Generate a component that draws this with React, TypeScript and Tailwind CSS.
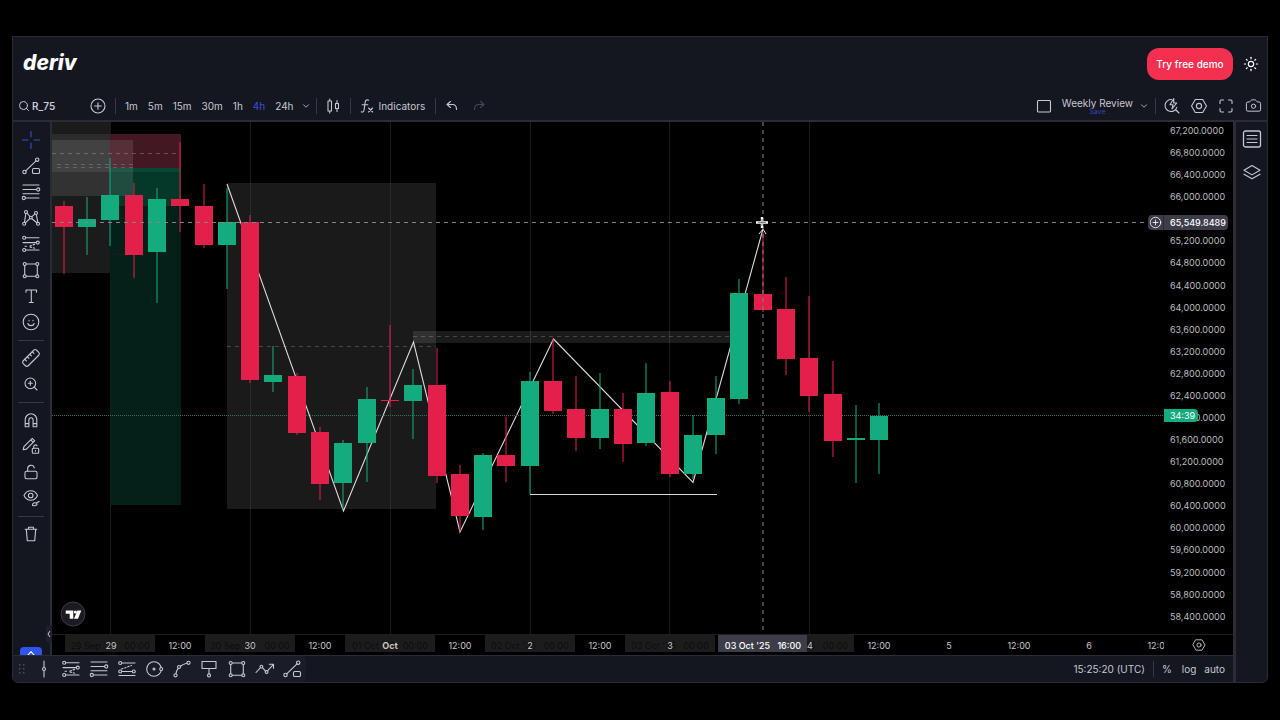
import React from "react";
import { Search, ChevronDown, ZoomIn, LockOpen, Ruler, Camera, Sun } from "lucide-react";

type IconProps = { children: React.ReactNode; size?: number };

const Icon = ({ children, size = 20 }: IconProps) => (
  <svg
    width={size}
    height={size}
    viewBox="0 0 20 20"
    fill="none"
    stroke="currentColor"
    strokeWidth="1.1"
    strokeLinecap="round"
    strokeLinejoin="round"
    className="shrink-0"
  >
    {children}
  </svg>
);

const TrendIcon = () => (
  <Icon>
    <circle cx="16.2" cy="3.7" r="1.7" />
    <circle cx="3.5" cy="16" r="1.7" />
    <path d="M4.7 14.8 15 4.9" />
    <rect x="11.5" y="12.5" width="7" height="5" rx="1.3" />
  </Icon>
);

const FibIcon = () => (
  <Icon>
    <path d="M2 3h16M2 7.5h13.5M2 11.7h16M4.5 16H18" />
    <circle cx="17.2" cy="7.5" r="1.6" />
    <circle cx="2.8" cy="16" r="1.6" />
  </Icon>
);

const PatternIcon = () => (
  <Icon>
    <circle cx="5" cy="4" r="1.5" />
    <circle cx="3.2" cy="15.8" r="1.5" />
    <circle cx="9.8" cy="9.6" r="1.4" />
    <circle cx="15" cy="5" r="1.5" />
    <circle cx="17" cy="15.8" r="1.5" />
    <path d="M4.8 5.5 3.5 14.3M4.4 14.8l4.3-4.2M6 5.2l2.9 3.3M10.9 8.7l2.9-2.5M15.3 6.5l1.5 7.8M10.9 10.7l5 4.1" />
  </Icon>
);

const ProjectionIcon = () => (
  <Icon>
    <circle cx="3.2" cy="3.8" r="1.5" />
    <circle cx="16.8" cy="8.6" r="1.5" />
    <circle cx="3.2" cy="16" r="1.5" />
    <path d="M4.8 3.8H18M2 8.6h13.2M4.8 16H18" />
    <path d="M4 12.3h3M9 12l5-1.8M9 13l6 1.5" strokeDasharray="1.5 1.8" />
  </Icon>
);

const ParallelIcon = () => (
  <Icon>
    <circle cx="3.2" cy="4" r="1.5" />
    <circle cx="3.2" cy="12.5" r="1.5" />
    <circle cx="16.8" cy="12.5" r="1.5" />
    <path d="M4.8 4H18M4.8 12.5h10.4M2 16.5h16" />
    <path d="M4.5 10l10-3.5" strokeDasharray="1.5 1.8" />
  </Icon>
);

const RectIcon = () => (
  <Icon>
    <circle cx="3.7" cy="4" r="1.5" />
    <circle cx="16.3" cy="4" r="1.5" />
    <circle cx="3.7" cy="16.3" r="1.5" />
    <circle cx="16.3" cy="16.3" r="1.5" />
    <path d="M5.2 4h9.6M5.2 16.3h9.6M3.7 5.5v9.3M16.3 5.5v9.3" />
  </Icon>
);

const TextIcon = () => (
  <Icon>
    <path d="M5 6.3V4h10.5v2.3M10.3 4v12.5M8.3 16.5h4" />
  </Icon>
);

const SmileIcon = () => (
  <Icon>
    <circle cx="10" cy="10" r="7.8" />
    <path d="M6.8 11.5c.8 2.8 5.6 2.8 6.4 0M8 8.2v.6M12 8.2v.6" />
  </Icon>
);

const MagnetIcon = () => (
  <Icon>
    <path d="M4.2 16.7V9.6a5.8 5.8 0 0 1 11.6 0v7.1h-3.7V9.8a2.1 2.1 0 0 0-4.2 0v6.9zM4.2 13.6h3.7M12.1 13.6h3.7" />
  </Icon>
);

const PencilLockIcon = () => (
  <Icon>
    <path d="M2.2 13.8l.7-3.2 8.3-8.2 2.5 2.5-8.3 8.2zM9.7 3.9l2.5 2.5" />
    <rect x="11.3" y="12.3" width="6.4" height="5" rx="1" />
    <path d="M12.7 12.2v-1.6a1.8 1.8 0 0 1 3.3-.9M14.5 14.5v.6" />
  </Icon>
);

const EyeIcon = () => (
  <Icon>
    <path d="M3 7.5c3-6.3 10.6-6.3 13.5 0-2.9 6.3-10.5 6.3-13.5 0z" />
    <circle cx="9.7" cy="7.5" r="2.3" />
    <path d="M11.5 17.5c0-2.8 2-3 3.6-2.4l3-1.7M12 17.5c2.5.6 4.3-.3 4-2" />
  </Icon>
);

const TrashIcon = () => (
  <Icon>
    <path d="M4.2 5.2h11.6M7.5 5V3.2h5V5M5.3 5.4l1 11.4h7.4l1-11.4" />
  </Icon>
);

const HexIcon = ({ size = 20 }: { size?: number }) => (
  <Icon size={size}>
    <path d="M6.3 3.5h7.4L17.5 10l-3.8 6.5H6.3L2.5 10z" />
    <circle cx="10" cy="10" r="2.6" />
  </Icon>
);

const PlusCircle = ({ size }: { size?: number }) => (
  <Icon size={size}>
    <circle cx="10" cy="10" r="7" />
    <path d="M10 6.7v6.6M6.7 10h6.6" />
  </Icon>
);

const railGroups = [
  [
    {
      name: "Crosshair",
      icon: (
        <Icon>
          <path d="M10 1.5v5.5M10 13v5.5M1.5 10H7M13 10h5.5" />
        </Icon>
      ),
    },
    { name: "Trend line", icon: <TrendIcon /> },
    { name: "Fib retracement", icon: <FibIcon /> },
    { name: "Patterns", icon: <PatternIcon /> },
    { name: "Projection", icon: <ProjectionIcon /> },
    { name: "Rectangle", icon: <RectIcon /> },
    { name: "Text", icon: <TextIcon /> },
    { name: "Icons", icon: <SmileIcon /> },
  ],
  [
    { name: "Measure", icon: <Ruler size={20} strokeWidth={1.3} className="-scale-x-100" /> },
    { name: "Zoom in", icon: <ZoomIn size={16} strokeWidth={1.6} /> },
  ],
  [
    { name: "Magnet", icon: <MagnetIcon /> },
    { name: "Keep drawing", icon: <PencilLockIcon /> },
    { name: "Lock drawings", icon: <LockOpen size={16} strokeWidth={1.6} /> },
    { name: "Hide drawings", icon: <EyeIcon /> },
  ],
  [{ name: "Remove drawings", icon: <TrashIcon /> }],
];

const favorites = [
  {
    name: "Vertical line",
    icon: (
      <Icon>
        <circle cx="10" cy="10" r="1.5" />
        <path d="M10 2v6.3M10 11.7V18" />
      </Icon>
    ),
  },
  { name: "Trend-based fib", icon: <ProjectionIcon /> },
  { name: "Fib retracement", icon: <FibIcon /> },
  { name: "Parallel channel", icon: <ParallelIcon /> },
  {
    name: "Circle",
    icon: (
      <Icon>
        <circle cx="10" cy="10" r="7.3" />
        <circle cx="10" cy="10" r="1" />
        <circle cx="17.2" cy="10" r="1.5" fill="#1a1c28" />
      </Icon>
    ),
  },
  {
    name: "Curve",
    icon: (
      <Icon>
        <circle cx="3.5" cy="16.3" r="1.6" />
        <circle cx="7" cy="8" r="1.5" />
        <circle cx="16.5" cy="3.8" r="1.6" />
        <path d="M4 14.7c.3-2.3 1-4 2.2-5.4M8.4 7.3c2-1.6 4-2.5 6.5-3" />
      </Icon>
    ),
  },
  {
    name: "Callout",
    icon: (
      <Icon>
        <path d="M3 2.5h14v7H3zM10 9.5v5.3" />
        <circle cx="10" cy="16.4" r="1.5" />
      </Icon>
    ),
  },
  { name: "Rectangle", icon: <RectIcon /> },
  {
    name: "Polyline",
    icon: (
      <Icon>
        <path d="M1 13.5l4.3-4.7M7.5 8.7l3 3.4M12.7 11.6l5.5-6M14.3 5.2h4.2v4" />
        <circle cx="6.4" cy="7.6" r="1.4" />
        <circle cx="11.6" cy="13" r="1.4" />
      </Icon>
    ),
  },
  { name: "Trend line", icon: <TrendIcon /> },
];

// x of the first candle and the distance between two candles
const FIRST_X = 64;
const STEP = 23.3;

// [high, body top, body bottom, low, rising]
const candles: [number, number, number, number, boolean][] = [
  [201, 206, 227, 274, false],
  [197, 219, 227, 255, true],
  [158, 195, 220, 246, true],
  [183, 195, 255, 278, false],
  [188, 199, 252, 303, true],
  [142, 199, 206, 232, false],
  [184, 206, 245, 248, false],
  [188, 222, 245, 289, true],
  [215, 222, 380, 383, false],
  [346, 375, 382, 392, true],
  [373, 376, 433, 435, false],
  [427, 432, 484, 500, false],
  [440, 443, 483, 509, true],
  [387, 399, 443, 482, true],
  [325, 400, 401, 407, false],
  [369, 385, 401, 439, true],
  [348, 385, 476, 483, false],
  [465, 474, 516, 531, false],
  [453, 455, 517, 530, true],
  [417, 455, 466, 482, false],
  [372, 381, 466, 494, true],
  [339, 381, 411, 414, false],
  [376, 409, 438, 451, false],
  [373, 409, 438, 449, true],
  [393, 409, 444, 462, false],
  [363, 393, 443, 446, true],
  [381, 392, 474, 477, false],
  [415, 435, 474, 479, true],
  [376, 398, 435, 454, true],
  [279, 293, 399, 404, true],
  [232, 294, 310, 312, false],
  [277, 309, 359, 375, false],
  [296, 358, 396, 412, false],
  [361, 394, 441, 457, false],
  [405, 438, 440, 483, true],
  [403, 416, 440, 474, true],
];

const dayLines = [110.5, 250.5, 390.5, 530.5, 669.5, 809.5];

const ghosts = [
  { x: 65, label: "29 Sep '25   00:00" },
  { x: 205, label: "30 Sep '25   00:00" },
  { x: 345, label: "01 Oct '25   00:00" },
  { x: 485, label: "02 Oct '25   00:00" },
  { x: 625, label: "03 Oct '25   00:00" },
  { x: 764, label: "04 Oct '25   00:00" },
];

const ticks = ["29", "12:00", "30", "12:00", "Oct", "12:00", "2", "12:00", "3", "", "4", "12:00", "5", "12:00", "6", "12:00"];

const prices = Array.from({ length: 23 }, (_, i) => 67200 - i * 400);

const Plot = () => (
  <svg className="absolute inset-0 h-full w-full" fill="none">
    <g transform="translate(-52 -122)">
      {dayLines.map((x) => (
        <path key={x} d={`M${x} 122V634`} stroke="#1c1c1e" />
      ))}

      <rect x="52" y="122" width="58" height="151" fill="#1b1b1b" />
      <rect x="110" y="134" width="71" height="34" fill="#431823" />
      <rect x="110" y="168" width="71" height="337" fill="#042018" />
      <rect x="110" y="168" width="71" height="38" fill="#10b981" fillOpacity=".16" />
      <rect x="110" y="168" width="71" height="4" fill="#10b981" fillOpacity=".12" />
      <rect x="52" y="140" width="81" height="56" fill="#fff" fillOpacity=".1" />
      <rect x="52" y="134" width="58" height="38" fill="#fff" fillOpacity=".08" />
      <path d="M52 153.5H178" stroke="#fff" strokeOpacity=".22" strokeDasharray="4 4" />
      <path d="M57 164.5H134M57 167.5H134" stroke="#fff" strokeOpacity=".18" strokeDasharray="4 4" />

      <rect x="227" y="183" width="209" height="326" fill="#fff" fillOpacity=".1" />
      <path d="M227 346.5H436" stroke="#fff" strokeOpacity=".2" strokeDasharray="4 4" />
      <rect x="413" y="331" width="319" height="12" fill="#fff" fillOpacity=".1" />
      <path d="M413 336.5H732" stroke="#fff" strokeOpacity=".2" strokeDasharray="4 4" />
      <path d="M250.5 183V509M390.5 183V509" stroke="#2a2a2c" />

      <path
        d="M227 184 343.5 511 413.5 342 460 532 553.5 339 693 482.5 763 229"
        stroke="#dcdcdc"
        strokeWidth="1.1"
      />
      <path d="M530 494.5H717" stroke="#d8d8d8" />
      <path d="M52 415.5H1164" stroke="#3d6b5c" strokeDasharray="1 1" />

      {candles.map(([high, top, bottom, low, rising], i) => {
        const x = Math.round(FIRST_X + i * STEP - 0.3);
        const color = rising ? "#14ab7f" : "#e2204a";
        return (
          <g key={i}>
            <path d={`M${x} ${high}V${low}`} stroke={color} strokeWidth="1.3" strokeOpacity=".8" />
            <rect x={x - 9} y={top} width="18" height={bottom - top} fill={color} />
          </g>
        );
      })}

      <path d="M759 234 763 229 766 234" stroke="#e4e4e4" />
      <path d="M52 222.5H1148" stroke="#858585" strokeDasharray="4 4" />
      <path d="M763 122V634" stroke="#858585" strokeDasharray="4 4" />
      <path d="M762 217V228M756 222.5H768" stroke="#fff" strokeWidth="2.4" />
      <path d="M762 219V226M758 222.5H766" stroke="#666" strokeWidth=".8" />
    </g>
  </svg>
);

const TimeAxis = () => (
  <svg className="absolute inset-0 h-full w-full" fontSize="9" textAnchor="middle">
    <g transform="translate(-52 0)">
      {ghosts.map(({ x, label }) => (
        <g key={x}>
          <rect x={x} y="0" width="90" height="17" fill="#1c1c1c" />
          <text x={x + 45} y="14" fill="#0c0c0c" xmlSpace="preserve">
            {label}
          </text>
        </g>
      ))}
      {ticks.map((label, i) => (
        <text
          key={i}
          x={Math.round(110.5 + i * 69.9)}
          y="14"
          fill="#c8c8c8"
          fontWeight={label === "Oct" ? 700 : 400}
        >
          {label}
        </text>
      ))}
      <rect x="718" y="0" width="89" height="17" fill="#3c3d49" />
      <text x="763" y="14" fill="#fff" fontWeight="500" xmlSpace="preserve">
        {"03 Oct '25   16:00"}
      </text>
    </g>
  </svg>
);

const Separator = () => <span className="h-4 w-px shrink-0 bg-[#363844]" />;

const Toolbar = () => (
  <div className="flex h-[29px] items-center pl-[5px]">
    <button className="flex w-[70px] items-center gap-0.5 font-semibold">
      <Search size={12} strokeWidth={2} />
      R_75
    </button>
    <button aria-label="Compare symbols" className="mr-[7px]">
      <PlusCircle />
    </button>
    <Separator />
    <div className="ml-[9px] flex items-center gap-2.5">
      {["1m", "5m", "15m", "30m", "1h", "4h", "24h"].map((t) => (
        <button key={t} className={t === "4h" ? "text-[#3b50d8]" : ""}>
          {t}
        </button>
      ))}
    </div>
    <button aria-label="More intervals" className="mr-[5px] ml-[7px]">
      <ChevronDown size={10} strokeWidth={2} />
    </button>
    <Separator />
    <button aria-label="Candles" className="mr-[7px] ml-1.5">
      <Icon>
        <path d="M5 5h3.5v10H5zM6.7 3v2M6.7 15v2M12.5 7.5h3v5h-3zM14 4.5v3M14 12.5v3" />
      </Icon>
    </button>
    <Separator />
    <button className="mr-2.5 ml-2 flex items-center gap-1">
      <Icon size={16}>
        <path
          d="M12 2.8c-2-1-3.7-.3-4.2 2.2L6.3 15c-.4 2.5-1.8 3-3.6 2.3M4 8.5h7M12 12.5l5 5M17 12.5l-5 5"
          strokeWidth="1.4"
        />
      </Icon>
      Indicators
    </button>
    <Separator />
    <button aria-label="Undo" className="ml-1.5">
      <Icon>
        <path d="M8.5 5.5 5 8.5l3.5 3M5.2 8.5h5.3c3 0 4 1.8 4 5" />
      </Icon>
    </button>
    <button aria-label="Redo" className="ml-[7px] text-[#454753]">
      <Icon>
        <path d="M11.5 5.5 15 8.5l-3.5 3M14.8 8.5H9.5c-3 0-4 1.8-4 5" />
      </Icon>
    </button>

    <div className="ml-auto flex items-center pr-1">
      <button aria-label="Layout" className="mr-2">
        <Icon>
          <rect x="3.5" y="4.5" width="13" height="11.5" rx="1" />
        </Icon>
      </button>
      <button className="flex flex-col items-center leading-3">
        <span>Weekly Review</span>
        <span className="text-[7px] leading-[6px] text-[#3346b4]">Save</span>
      </button>
      <button aria-label="Manage layouts" className="mr-1.5 ml-1.5">
        <ChevronDown size={10} strokeWidth={2} />
      </button>
      <Separator />
      <div className="ml-1.5 flex gap-[7px]">
        <button aria-label="Quick search">
          <Icon>
            <path d="M9.5 3.5a6 6 0 1 0 5.3 7.8M13.5 13.5l3.5 3.5M11.8 2.5 8 8.8h3l-1 4.2 4.7-6h-3z" />
          </Icon>
        </button>
        <button aria-label="Settings">
          <HexIcon />
        </button>
        <button aria-label="Fullscreen">
          <Icon>
            <path d="M4 7.5V5.2C4 4.5 4.5 4 5.2 4h2.3M12.5 4h2.3c.7 0 1.2.5 1.2 1.2v2.3M16 12.5v2.3c0 .7-.5 1.2-1.2 1.2h-2.3M7.5 16H5.2C4.5 16 4 15.5 4 14.8v-2.3" />
          </Icon>
        </button>
        <button aria-label="Snapshot" className="flex w-5 items-center justify-center">
          <Camera size={17} strokeWidth={1.4} />
        </button>
      </div>
    </div>
  </div>
);

const Rail = () => (
  <aside className="relative w-[37px] shrink-0 overflow-hidden pt-[5px] pr-px">
    {railGroups.map((group, g) => (
      <div key={g}>
        {g > 0 && <div className="mx-[5px] mt-[5px] mb-1 h-px bg-[#363844]" />}
        {group.map(({ name, icon }) => (
          <button
            key={name}
            aria-label={name}
            className={`flex h-[26px] w-full items-center justify-center ${
              name === "Crosshair" ? "text-[#3450d8]" : ""
            }`}
          >
            {icon}
          </button>
        ))}
      </div>
    ))}
    <button
      aria-label="Scroll down"
      className="absolute -bottom-1 left-[7px] flex h-3 w-[22px] justify-center rounded bg-[#2f55f0] text-white"
    >
      <Icon size={12}>
        <path d="M5 13.5l5-6 5 6" strokeWidth="1.8" />
      </Icon>
    </button>
  </aside>
);

const PriceAxis = () => (
  <div className="relative flex w-[69px] shrink-0 flex-col justify-between pt-[2px] pb-2.5 pl-1.5 text-[9px] leading-[14px] text-[#bdbdbd]">
    {prices.map((p) => (
      <span key={p}>{p.toLocaleString("en-US", { minimumFractionDigits: 4 })}</span>
    ))}
    <div className="absolute top-[93px] -left-4 flex h-[15px] w-20 items-center rounded-sm bg-[#3c3d49] text-white">
      <button aria-label="Add order" className="flex w-[15px] justify-center">
        <PlusCircle size={15} />
      </button>
      <span className="h-full w-px bg-[#2a2b36]" />
      <span className="pl-1.5 font-medium">65,549.8489</span>
    </div>
    <div className="absolute top-[287px] left-0 h-[13px] w-[34px] rounded-r-sm bg-[#14ab7f] pl-1.5 leading-[13px] text-white">
      34:39
    </div>
  </div>
);

const BottomBar = () => (
  <div className="flex h-[27px] items-center border-t border-[#2a2b36]">
    <div className="flex h-full w-[293px] items-center rounded-r bg-[#1a1c28]">
      <div className="flex w-[17px] justify-center text-[#4b4d59]">
        <svg width="8" height="12" fill="currentColor">
          {[1, 5, 9].map((y) => (
            <path key={y} d={`M1 ${y}h1.5v1.5h-1.5zM5 ${y}h1.5v1.5h-1.5z`} />
          ))}
        </svg>
      </div>
      {favorites.map(({ name, icon }) => (
        <button key={name} aria-label={name} className="flex flex-1 justify-center">
          {icon}
        </button>
      ))}
    </div>
    <div className="ml-auto flex items-center pr-2">
      <button className="mr-2">15:25:20 (UTC)</button>
      <Separator />
      <button className="ml-2">%</button>
      <button className="ml-2.5">log</button>
      <button className="ml-2">auto</button>
    </div>
  </div>
);

const Chart = () => (
  <main className="flex min-w-0 flex-1 flex-col bg-black">
    <div className="flex flex-1">
      <div className="relative min-w-0 flex-1 overflow-hidden">
        <Plot />
        <svg className="absolute bottom-[7px] left-2" width="26" height="26" fill="#fff">
          <circle cx="13" cy="13" r="12" fill="#1b1b22" stroke="#3c3c44" />
          <path d="M5.7 9.5h7.6v8.3H9.7v-5H5.7zM17.3 9.5h4l-3.3 8.3h-4z" />
          <circle cx="15.3" cy="11" r="1.5" />
        </svg>
      </div>
      <PriceAxis />
    </div>
    <div className="flex h-[21px] border-t border-[#1f1f22]">
      <div className="relative min-w-0 flex-1 overflow-hidden">
        <TimeAxis />
      </div>
      <div className="flex w-[69px] shrink-0 justify-center">
        <button aria-label="Axis settings">
          <HexIcon size={16} />
        </button>
      </div>
    </div>
  </main>
);

const App = () => {
  return (
    <div className="flex min-h-screen flex-col bg-black px-3 pt-9 pb-[37px] font-['Inter',sans-serif] text-[10px] leading-4 text-[#c6c8d2]">
      <div className="flex flex-1 flex-col overflow-hidden rounded-b-md border border-[#2a2b36] bg-[#141620]">
        <header className="flex h-[54px] items-center justify-between pr-2 pl-2.5">
          <a href="#" className="pb-0.5 text-[21px] leading-6 font-extrabold text-white italic">
            deriv
          </a>
          <div className="flex items-center gap-2.5">
            <button className="h-8 w-[86px] rounded-xl bg-[#f43050] font-medium text-white">Try free demo</button>
            <button aria-label="Toggle theme" className="text-white">
              <Sun size={16} strokeWidth={1.7} />
            </button>
          </div>
        </header>
        <Toolbar />
        <div className="flex flex-1 border-t-2 border-[#2a2b36]">
          <div className="flex min-w-0 flex-1 flex-col">
            <div className="flex flex-1">
              <Rail />
              <div className="relative w-0.5 shrink-0 bg-[#2a2b36]">
                <button
                  aria-label="Hide drawings toolbar"
                  className="absolute right-0 bottom-3 flex h-[18px] w-1.5 items-center justify-center rounded-l bg-[#1f202b]"
                >
                  <svg width="4" height="8" fill="none" stroke="currentColor">
                    <path d="M3 1 1 4l2 3" />
                  </svg>
                </button>
              </div>
              <Chart />
            </div>
            <BottomBar />
          </div>
          <div className="w-[3px] shrink-0 bg-[#2a2b36]" />
          <aside className="flex w-[31px] shrink-0 flex-col items-center gap-[13px] pt-[7px]">
            <button aria-label="Watchlist">
              <Icon>
                <rect x="1.5" y="2" width="17" height="16" rx="2" strokeWidth="1.3" />
                <path d="M5 6.5h10M5 10h10M5 13.5h10" />
              </Icon>
            </button>
            <button aria-label="Object tree">
              <Icon>
                <path d="M10 3.5l8 4.7-8 4.7-8-4.7zM2 12.2l8 4.6 8-4.6" />
              </Icon>
            </button>
          </aside>
        </div>
      </div>
    </div>
  );
};

export default App;
